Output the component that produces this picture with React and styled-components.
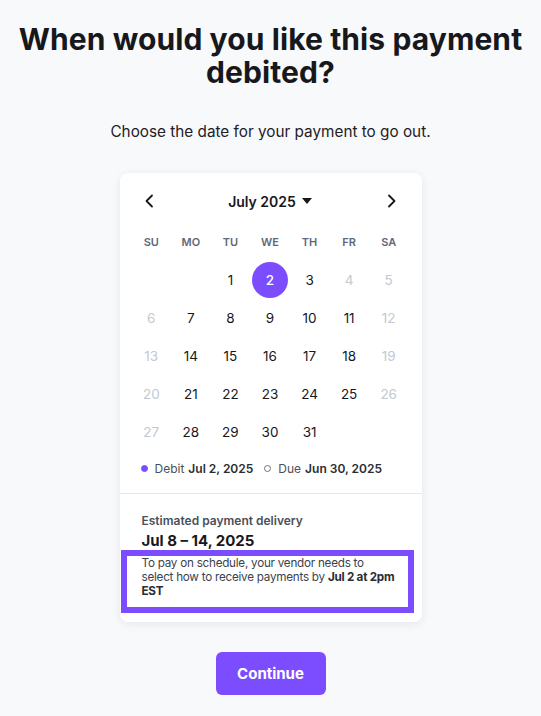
import React from "react";
import styled, { createGlobalStyle } from "styled-components";

const purple = "#7b4dff";

const GlobalStyle = createGlobalStyle`
    html, body {
        margin: 0;
        padding: 0;
        background: #f8f9fb;
    }
    body {
        font-family: Inter, "Noto Sans", sans-serif;
        color: #17181c;
    }
`;

const weekdays = ["SU", "MO", "TU", "WE", "TH", "FR", "SA"];

// null = empty cell before the 1st
const days = [null, null, ...Array.from({ length: 31 }, (_, i) => i + 1)];
const holidays = [4];

const App = () => {
    return (
        <Page>
            <GlobalStyle />
            <Title>When would you like this payment debited?</Title>
            <Subtitle>Choose the date for your payment to go out.</Subtitle>
            <Card>
                <CalendarSection>
                    <MonthHeader>
                        <NavButton aria-label="Previous month">
                            <svg width="16" height="16" viewBox="0 0 16 16">
                                <path
                                    d="M10 2.5 4.5 8l5.5 5.5"
                                    fill="none"
                                    stroke="#17181c"
                                    strokeWidth="1.8"
                                    strokeLinecap="round"
                                    strokeLinejoin="round"
                                />
                            </svg>
                        </NavButton>
                        <MonthLabel>
                            July 2025
                            <svg width="10" height="6" viewBox="0 0 10 6">
                                <path d="M0 0h10L5 6z" fill="#17181c" />
                            </svg>
                        </MonthLabel>
                        <NavButton aria-label="Next month">
                            <svg width="16" height="16" viewBox="0 0 16 16">
                                <path
                                    d="M6 2.5 11.5 8 6 13.5"
                                    fill="none"
                                    stroke="#17181c"
                                    strokeWidth="1.8"
                                    strokeLinecap="round"
                                    strokeLinejoin="round"
                                />
                            </svg>
                        </NavButton>
                    </MonthHeader>
                    <DayGrid>
                        {weekdays.map((w) => (
                            <Weekday key={w}>{w}</Weekday>
                        ))}
                        {days.map((d, i) => {
                            if (d === null) return <DayCell key={`e${i}`} />;
                            const col = i % 7;
                            const muted =
                                col === 0 || col === 6 || holidays.includes(d);
                            return (
                                <DayCell key={d}>
                                    <DayNumber
                                        $selected={d === 2}
                                        $muted={muted}
                                    >
                                        {d}
                                    </DayNumber>
                                </DayCell>
                            );
                        })}
                    </DayGrid>
                    <Legend>
                        <LegendItem>
                            <Dot $filled />
                            Debit <strong>Jul 2, 2025</strong>
                        </LegendItem>
                        <LegendItem>
                            <Dot />
                            Due <strong>Jun 30, 2025</strong>
                        </LegendItem>
                    </Legend>
                </CalendarSection>
                <DeliverySection>
                    <DeliveryLabel>Estimated payment delivery</DeliveryLabel>
                    <DeliveryDate>Jul 8 – 14, 2025</DeliveryDate>
                    <Notice>
                        To pay on schedule, your vendor needs to
                        <br />
                        select how to receive payments by{" "}
                        <strong>
                            Jul 2 at 2pm
                            <br />
                            EST
                        </strong>
                    </Notice>
                </DeliverySection>
            </Card>
            <ContinueButton>Continue</ContinueButton>
        </Page>
    );
};

const Page = styled.div`
    min-height: 100vh;
    display: flex;
    flex-direction: column;
    align-items: center;
    padding: 23px 0 20px;
    box-sizing: border-box;
`;

const Title = styled.h1`
    margin: 0;
    width: 520px;
    text-align: center;
    font-size: 30px;
    line-height: 33px;
    font-weight: 700;
    letter-spacing: 0.1px;
    color: #17181c;
`;

const Subtitle = styled.p`
    margin: 32px 0 0;
    font-size: 15.3px;
    line-height: 22px;
    color: #1f2024;
`;

const Card = styled.div`
    margin-top: 30px;
    width: 302px;
    background: #ffffff;
    border-radius: 8px;
    box-shadow: 0 2px 10px rgba(20, 24, 40, 0.08);
`;

const CalendarSection = styled.div`
    padding: 16px 13px 13px 12px;
    border-bottom: 1px solid #e6e8ec;
`;

const MonthHeader = styled.div`
    display: flex;
    align-items: center;
    justify-content: space-between;
    height: 24px;
    padding: 0 10px;
`;

const NavButton = styled.button`
    border: none;
    background: none;
    padding: 0;
    width: 16px;
    height: 16px;
    display: flex;
    cursor: pointer;
`;

const MonthLabel = styled.div`
    display: flex;
    align-items: center;
    gap: 6px;
    font-size: 14px;
    font-weight: 600;
    color: #17181c;
`;

const DayGrid = styled.div`
    display: grid;
    grid-template-columns: repeat(7, 1fr);
    grid-auto-rows: 38px;
    margin-top: 10px;
`;

const Weekday = styled.div`
    display: flex;
    align-items: center;
    justify-content: center;
    font-size: 11px;
    font-weight: 600;
    color: #5f6878;
`;

const DayCell = styled.div`
    display: flex;
    align-items: center;
    justify-content: center;
`;

const DayNumber = styled.div`
    width: 36px;
    height: 36px;
    border-radius: 50%;
    display: flex;
    align-items: center;
    justify-content: center;
    font-size: 13.5px;
    background: ${(p) => (p.$selected ? purple : "transparent")};
    color: ${(p) =>
        p.$selected ? "#ffffff" : p.$muted ? "#c3c8d1" : "#17181c"};
    font-weight: ${(p) => (p.$selected ? 500 : 400)};
`;

const Legend = styled.div`
    display: flex;
    gap: 11px;
    padding: 5px 0 0 9px;
    height: 24px;
    align-items: center;
`;

const LegendItem = styled.div`
    display: flex;
    align-items: center;
    gap: 4px;
    font-size: 12px;
    color: #4a4f5a;

    strong {
        font-weight: 600;
        color: #2a2d33;
    }
`;

const Dot = styled.span`
    width: 7px;
    height: 7px;
    box-sizing: border-box;
    border-radius: 50%;
    margin-right: 3px;
    background: ${(p) => (p.$filled ? purple : "transparent")};
    border: 1.5px solid ${(p) => (p.$filled ? purple : "#6b7280")};
`;

const DeliverySection = styled.div`
    padding: 18px 10px 24px 22px;
`;

const DeliveryLabel = styled.div`
    font-size: 12px;
    line-height: 18px;
    font-weight: 600;
    color: #4a4f5a;
`;

const DeliveryDate = styled.div`
    font-size: 15px;
    line-height: 22px;
    font-weight: 700;
    color: #17181c;
`;

const Notice = styled.div`
    position: relative;
    margin-top: 4px;
    font-size: 11.7px;
    line-height: 14px;
    letter-spacing: -0.25px;
    white-space: nowrap;
    color: #3d424c;

    strong {
        font-weight: 700;
        color: #2a2d33;
    }

    &::after {
        content: "";
        position: absolute;
        left: -21px;
        top: -6px;
        right: -2px;
        bottom: -15px;
        border: 6px solid ${purple};
        pointer-events: none;
    }
`;

const ContinueButton = styled.button`
    margin-top: 30px;
    width: 110px;
    height: 43px;
    border: none;
    border-radius: 6px;
    background: ${purple};
    color: #ffffff;
    font-family: inherit;
    font-size: 15px;
    font-weight: 700;
    cursor: pointer;
`;

export default App;
